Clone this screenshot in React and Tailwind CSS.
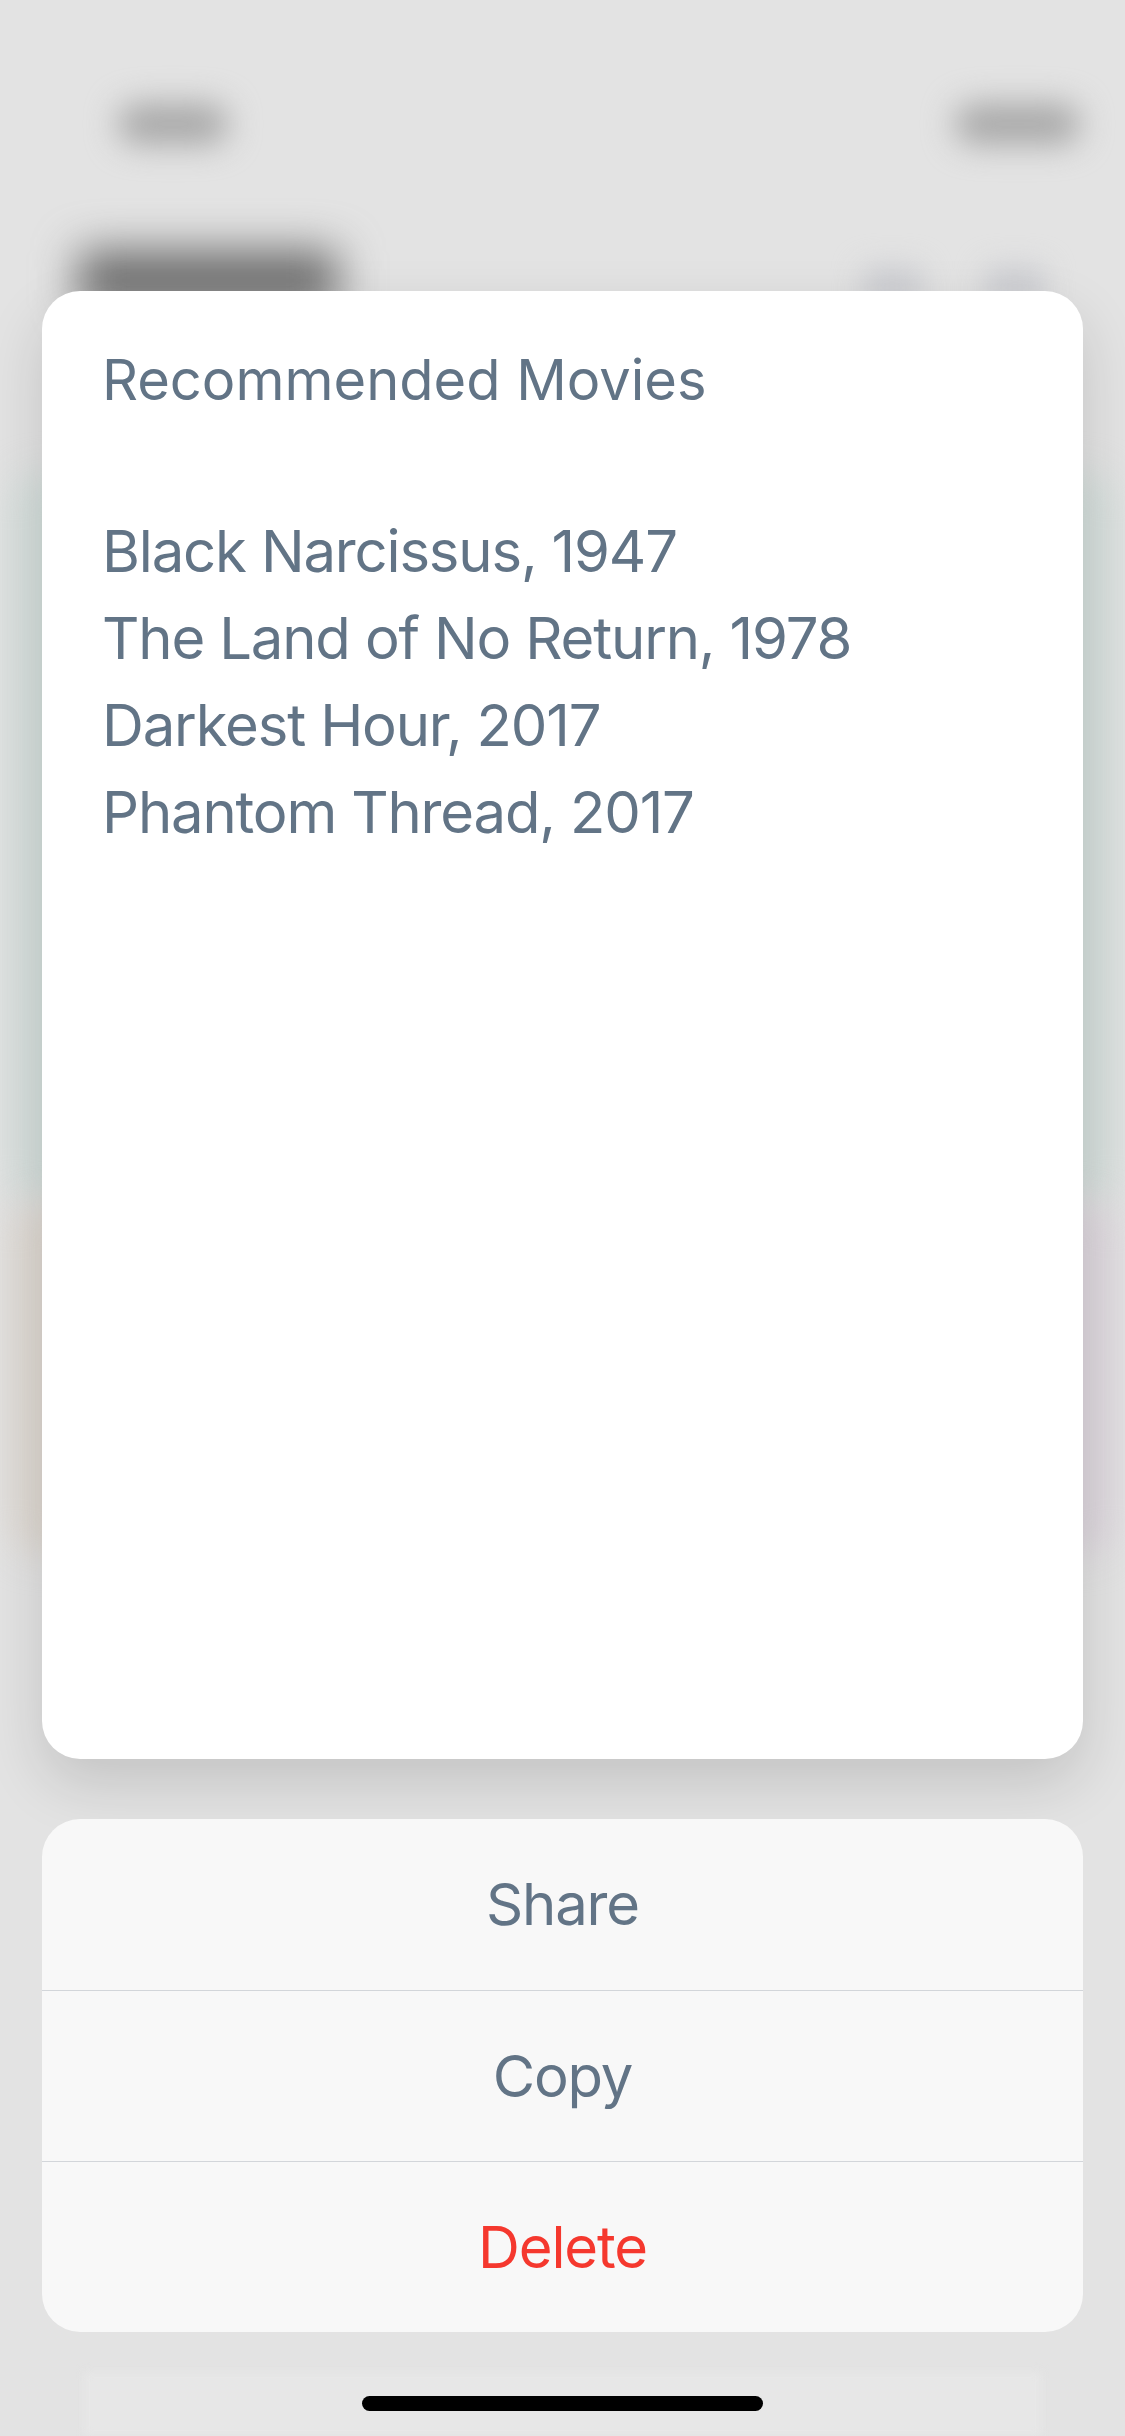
import React from "react";

const movies = [
  "Black Narcissus, 1947",
  "The Land of No Return, 1978",
  "Darkest Hour, 2017",
  "Phantom Thread, 2017",
];

const actions = [
  { label: "Share", color: "text-[#627486]" },
  { label: "Copy", color: "text-[#627486]" },
  { label: "Delete", color: "text-[#f5382e]" },
];

const font = { fontFamily: "Inter, 'Noto Sans', sans-serif" };

// blurred list screen that sits under the sheet
const Backdrop = () => (
  <div className="absolute inset-0 flex flex-col pointer-events-none">
    {/* status bar */}
    <div className="flex justify-between pt-[104px] pl-[118px] pr-[45px]">
      <div className="w-[110px] h-[40px] rounded-full bg-[#a6a6a6] blur-[16px]" />
      <div className="w-[125px] h-[40px] rounded-full bg-[#a6a6a6] blur-[16px]" />
    </div>
    {/* nav header */}
    <div className="flex justify-between items-end mt-[106px] pl-[78px] pr-[80px]">
      <div className="w-[260px] h-[60px] rounded-lg bg-[#6e6e6e] blur-[22px]" />
      <div className="flex gap-[63px]">
        <div className="w-[60px] h-[44px] rounded-lg bg-[#cdced2] blur-[14px]" />
        <div className="w-[60px] h-[44px] rounded-lg bg-[#cdced2] blur-[14px]" />
      </div>
    </div>
    {/* content cards */}
    <div className="flex flex-col mt-[164px] px-[10px]">
      <div className="h-[730px] rounded-[30px] bg-[#d3ddda] blur-[18px]" />
      <div className="flex h-[350px]">
        <div className="flex-1 rounded-[30px] bg-[#ddd7d0] blur-[18px]" />
        <div className="flex-1 rounded-[30px] bg-[#dcd5dc] blur-[18px]" />
      </div>
    </div>
    {/* tab bar */}
    <div className="mt-auto mx-[84px] h-[64px] bg-[#e7e7e7] blur-[4px]" />
  </div>
);

const App = () => {
  return (
    <div
      className="relative w-[1125px] h-[2436px] overflow-hidden bg-[#e3e3e3]"
      style={font}
    >
      <Backdrop />

      <div className="relative flex flex-col px-[42px] pt-[291px]">
        {/* Preview card */}
        <div className="h-[1468px] rounded-[38px] bg-white pl-[60px] pt-[57px] shadow-[0_24px_60px_rgba(0,0,0,0.14)]">
          <h1 className="text-[56px] leading-[64px] text-[#627486]">
            Recommended Movies
          </h1>
          <ul className="mt-[96px]">
            {movies.map((m, i) => (
              <li
                key={i}
                className="text-[58px] leading-[87px] tracking-[-0.02em] text-[#627486]"
              >
                {m}
              </li>
            ))}
          </ul>
        </div>

        {/* Action sheet */}
        <div className="mt-[60px] rounded-[38px] bg-[#f8f8f8] overflow-hidden">
          {actions.map((a, i) => (
            <div
              key={a.label}
              className={
                "h-[171px] flex items-center justify-center text-[58px] tracking-[-0.02em] " +
                a.color +
                (i > 0 ? " border-t border-[#d3d6da]" : "")
              }
            >
              {a.label}
            </div>
          ))}
        </div>

        {/* Home indicator */}
        <div className="mt-[64px] self-center w-[401px] h-[15px] rounded-full bg-black" />
      </div>
    </div>
  );
};

export default App;
